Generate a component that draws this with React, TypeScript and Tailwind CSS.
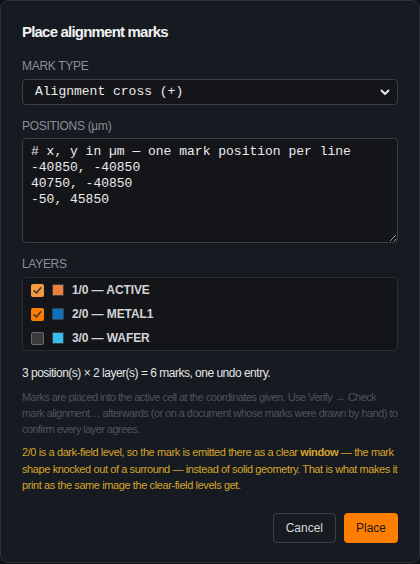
import React from "react";

interface Layer {
  id: string;
  name: string;
  color: string;
  checked: boolean;
}

const layers: Layer[] = [
  { id: "1/0", name: "ACTIVE", color: "bg-[#ef7d3b]", checked: true },
  { id: "2/0", name: "METAL1", color: "bg-[#0e72be]", checked: true },
  { id: "3/0", name: "WAFER", color: "bg-[#38bdf0]", checked: false },
];

const positions = `# x, y in µm — one mark position per line
-40850, -40850
40750, -40850
-50, 45850`;

function App() {
  return (
    <div className="w-[420px] h-[564px] bg-[#0e1116]">
      <div className="w-[420px] h-[563px] bg-[#161a21] border border-[#2d323a] rounded-[8px] px-[21px] pt-[21px] font-['Liberation_Sans',Arial,sans-serif] flex flex-col">
        <h1 className="text-[15px] leading-[20px] font-bold text-[#f2f2f2] tracking-[-0.8px]">
          Place alignment marks
        </h1>

        <div className="mt-[16px] text-[12px] leading-[16px] text-[#8b8f96] tracking-[-0.3px]">
          MARK TYPE
        </div>
        <div className="mt-[5px] h-[26px] rounded-[4px] border border-[#3a3e45] bg-[#141518] flex items-center justify-between pl-[12px] pr-[6px]">
          <span className="font-['Liberation_Mono',monospace] text-[13px] text-[#ececec]">
            Alignment cross (+)
          </span>
          <svg width="12" height="12" viewBox="0 0 12 12" fill="none">
            <path d="M2.5 4.5 L6 8 L9.5 4.5" stroke="#e8e8e8" strokeWidth="2" strokeLinecap="round" strokeLinejoin="round" />
          </svg>
        </div>

        <div className="mt-[13px] text-[12px] leading-[16px] text-[#8b8f96] tracking-[-0.3px]">
          POSITIONS (µm)
        </div>
        <textarea
          readOnly
          value={positions}
          className="mt-[4px] h-[105px] w-full rounded-[4px] border border-[#3a3e45] bg-[#141518] px-[8px] py-[5px] font-['Liberation_Mono',monospace] text-[13px] leading-[16px] text-[#ececec] outline-none"
        />

        <div className="mt-[13px] text-[12px] leading-[16px] text-[#8b8f96] tracking-[-0.3px]">
          LAYERS
        </div>
        <div className="mt-[5px] h-[74px] rounded-[4px] border border-[#2a2e35] bg-[#141518] flex flex-col justify-center px-[8px]">
          {layers.map((layer, i) => (
            <div key={layer.id} className="h-[24.5px] flex items-center gap-[8px]">
              {layer.checked ? (
                <span
                  className={`shrink-0 w-[13px] h-[13px] rounded-[2px] flex items-center justify-center ${
                    i === 0 ? "bg-[#f7993f]" : "bg-[#ff7d00]"
                  }`}
                >
                  <svg width="9" height="9" viewBox="0 0 9 9" fill="none">
                    <path d="M1.2 4.8 L3.5 7 L7.8 1.8" stroke="#3a3a3a" strokeWidth="1.6" strokeLinecap="round" strokeLinejoin="round" />
                  </svg>
                </span>
              ) : (
                <span className="shrink-0 w-[13px] h-[13px] rounded-[2px] bg-[#3b3b3b] border border-[#6a6a6a]" />
              )}
              <span className={`shrink-0 w-[12px] h-[12px] rounded-[1px] border border-[#3a4048] ${layer.color}`} />
              <span className="text-[12px] text-[#d2d4d8] font-bold tracking-[-0.1px]">
                {layer.id} — {layer.name}
              </span>
            </div>
          ))}
        </div>

        <p className="mt-[14px] text-[12px] leading-[16px] text-[#e4e4e4] tracking-[-0.5px]">
          3 position(s) × 2 layer(s) = 6 marks, one undo entry.
        </p>

        <p className="mt-[8px] text-[11px] leading-[16px] text-[#4d535d] tracking-[-0.55px]">
          Marks are placed into the active cell at the coordinates given. Use Verify → Check mark alignment… afterwards (or on a document whose marks were drawn by hand) to confirm every layer agrees.
        </p>

        <p className="mt-[7px] text-[11px] leading-[16.5px] text-[#d6a52a] tracking-[-0.4px]">
          2/0 is a dark-field level, so the mark is emitted there as a clear <b>window</b> — the mark shape knocked out of a surround — instead of solid geometry. That is what makes it print as the same image the clear-field levels get.
        </p>

        <div className="mt-auto mb-[19px] flex justify-end gap-[8px]">
          <button className="h-[30px] px-[12px] rounded-[4px] border border-[#3a3e45] bg-transparent text-[12px] text-[#d8d8d8]">
            Cancel
          </button>
          <button className="h-[30px] w-[54px] rounded-[4px] bg-[#ff7d00] text-[12px] text-[#1a1a1a]">
            Place
          </button>
        </div>
      </div>
    </div>
  );
}

export default App;
